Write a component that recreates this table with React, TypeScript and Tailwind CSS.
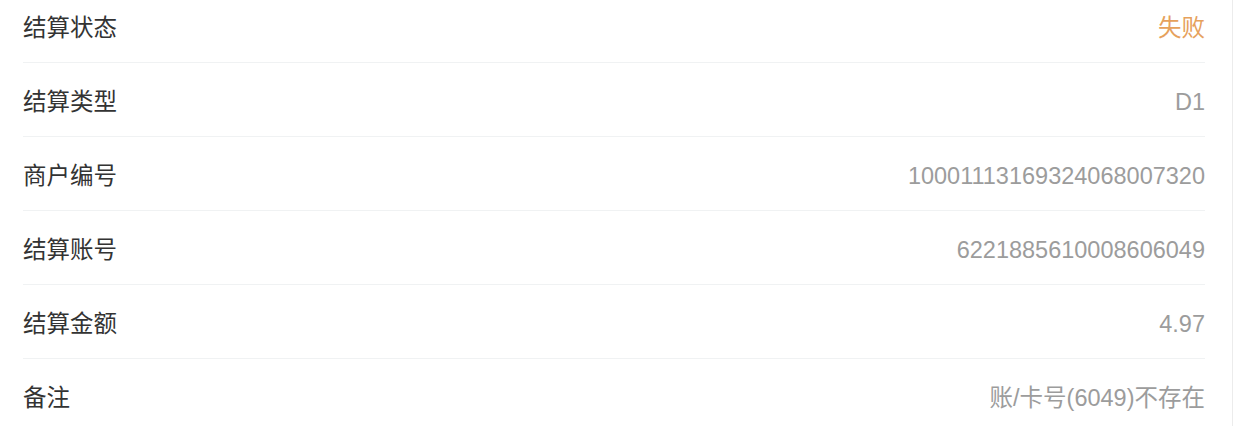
import React from "react";

const rows: { label: string; value: string; accent?: boolean }[] = [
  { label: "结算状态", value: "失败", accent: true },
  { label: "结算类型", value: "D1" },
  { label: "商户编号", value: "10001113169324068007320" },
  { label: "结算账号", value: "6221885610008606049" },
  { label: "结算金额", value: "4.97" },
  { label: "备注", value: "账/卡号(6049)不存在" },
];

export default function App() {
  return (
    <div
      className="h-[426px] w-[1234px] overflow-hidden bg-white"
      style={{ fontFamily: '"Liberation Sans", "Noto Sans CJK SC", sans-serif' }}
    >
      <div className="-mt-[11px] w-[1233px] border-r border-[#ececec] pl-[23px] pr-[27px]">
        {rows.map((r, i) => (
          <div
            key={r.label}
            className={`flex h-[74px] items-center justify-between pt-[6px] text-[23.5px] leading-none ${
              i < rows.length - 1 ? "border-b border-[#f0f2f3]" : ""
            }`}
          >
            <span className="text-[#333333]">{r.label}</span>
            <span className={r.accent ? "text-[#e6a15c]" : "text-[#9c9c9c]"}>{r.value}</span>
          </div>
        ))}
      </div>
    </div>
  );
}
